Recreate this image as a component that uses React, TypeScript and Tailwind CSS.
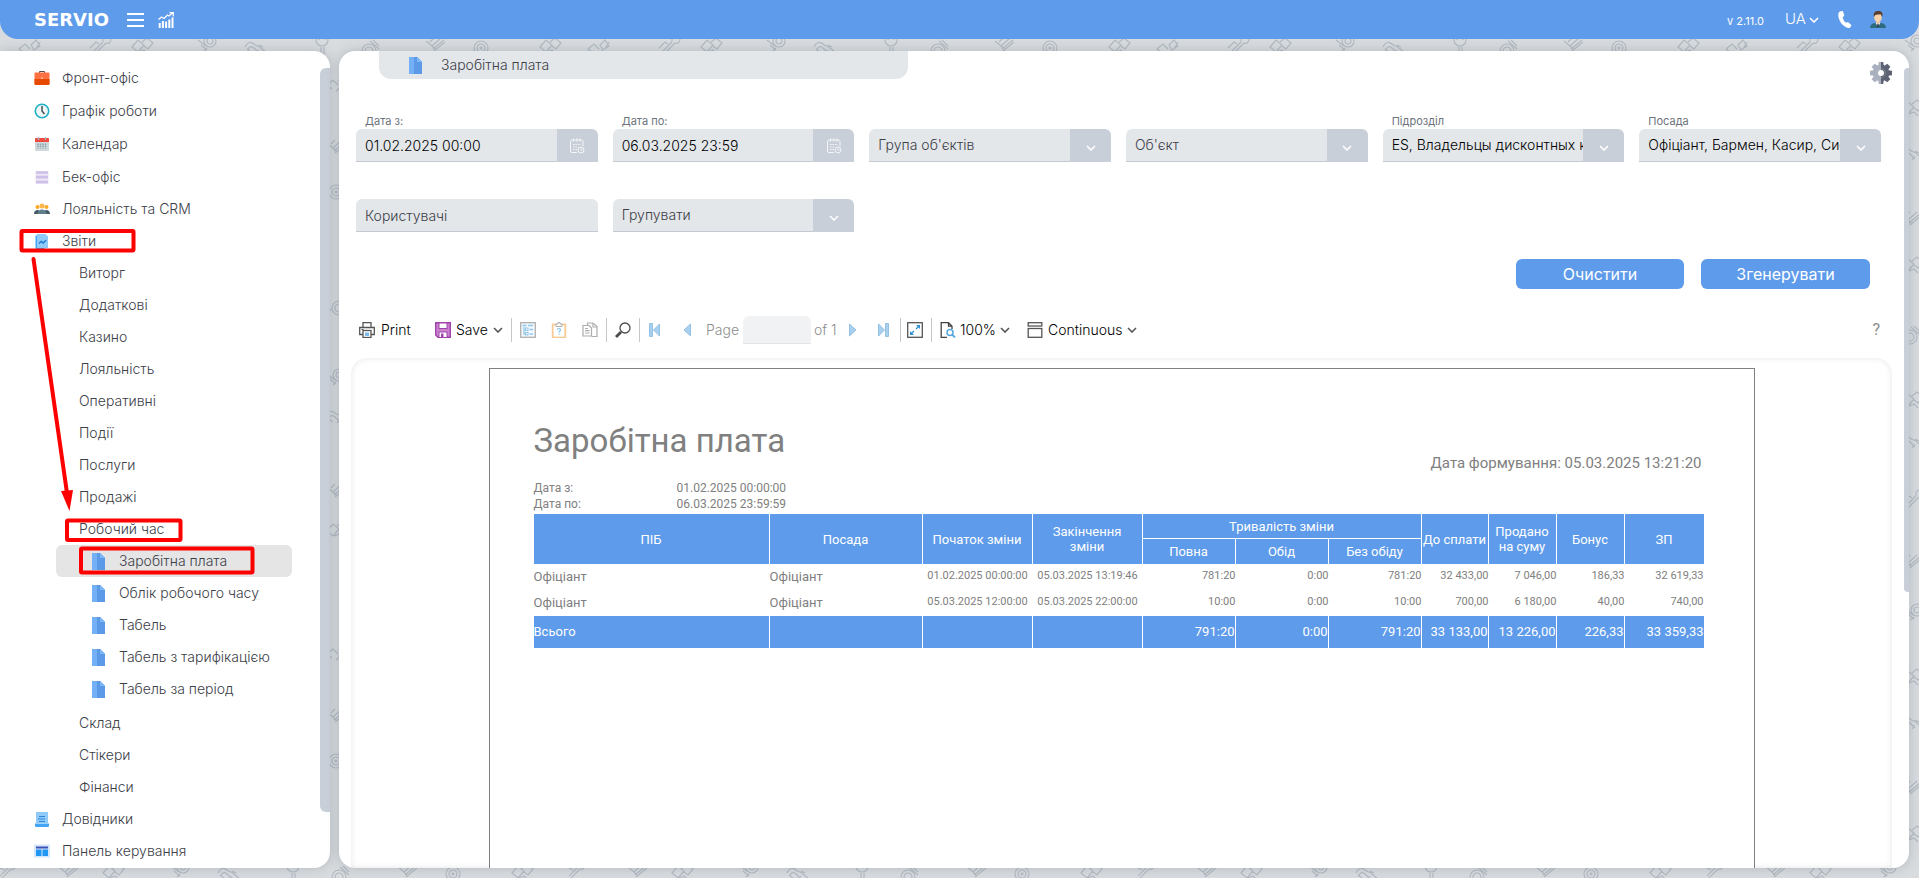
import React from "react";

type IconProps = { className?: string };

function Doodles() {
  const pyramid = (x: number, y: number, k: string) => (
    <g key={k} transform={`translate(${x} ${y})`}>
      <path d="M-9 3l6-5 5 5M-4 7l-5-4M3-1l5-5 4 6-6 4zM8 3l4-7M0 9l5-4" />
    </g>
  );
  const wrench = (x: number, y: number, k: string) => (
    <g key={k} transform={`translate(${x} ${y})`}>
      <path d="M-7 8L5-4M-5 10L8-3M5-4c-1-4 2-7 5-6M8-3c3 1 5-1 5-4M-8 2l6-6 3 2" />
    </g>
  );
  const cards = (x: number, y: number, k: string) => (
    <g key={k} transform={`translate(${x} ${y})`}>
      <path d="M-9 1l6-7 6 5-6 7zM1-4l5-4 6 5-5 6-4-3M-2 6l5-2 4 4" />
    </g>
  );
  const comb = (x: number, y: number, k: string) => (
    <g key={k} transform={`translate(${x} ${y})`}>
      <circle cx="3" cy="-5" r="6" />
      <circle cx="3" cy="-5" r="3" />
      <path d="M-1 0l-8-6M0 2l-3 3M-6-1l6 5" />
    </g>
  );
  const hands = (x: number, y: number, k: string) => (
    <g key={k} transform={`translate(${x} ${y})`}>
      <path d="M-10 1c2-5 6-6 9-3s5 1 7 4l6 5M-7 3c2-3 4-3 6-1l5 5M-3 7l-5-4M4-1l4 2M1 8l3-4" />
    </g>
  );
  const loupe = (x: number, y: number, k: string) => (
    <g key={k} transform={`translate(${x} ${y})`}>
      <circle cx="0" cy="-6" r="6" />
      <path d="M-1 1v7h3V1M-3-6a3 3 0 016 0" />
    </g>
  );
  const plate = (x: number, y: number, k: string) => (
    <g key={k} transform={`translate(${x} ${y})`}>
      <circle cx="-1" cy="5" r="7" />
      <circle cx="-1" cy="5" r="4" />
      <path d="M0-5l9 8M3-6l6 6M-9 6l-2 3" />
    </g>
  );
  const brush = (x: number, y: number, k: string) => (
    <g key={k} transform={`translate(${x} ${y})`}>
      <path d="M-9-5l6 5 9-8M-2 3L9-6M-5-4l4-4M-1 5L10-4M-3 0l3 3" />
    </g>
  );
  const at = (x: number, y: number, k: string) => (
    <g key={k} transform={`translate(${x} ${y})`}>
      <circle cx="0" cy="2" r="7" />
      <circle cx="0" cy="2" r="4" />
      <circle cx="0" cy="2" r="1" />
    </g>
  );
  const kinds = [pyramid, wrench, cards, comb, hands, loupe, plate, brush, at, cards];
  const top = [28, 98, 141, 207, 255, 322, 370, 435, 481, 549];
  const bottom = [3, 68, 112, 180, 228, 293, 340, 407, 453, 521];
  const bottomKinds = [wrench, brush, cards, comb, hands, loupe, plate, brush, at, cards];
  const left = [82, 148, 190, 380, 415, 492, 530];
  const leftKinds = [pyramid, brush, at, comb, hands, brush, cards];
  const right = [108, 152, 220, 265, 332, 400, 440, 500, 563];
  const rightKinds = [cards, hands, brush, cards, plate, cards, hands, wrench, brush];
  return (
    <svg className="absolute inset-0 h-full w-full" aria-hidden="true">
      <defs>
        <pattern id="doodles" width="569" height="569" patternUnits="userSpaceOnUse">
          <g fill="none" stroke="#b3bac2" strokeWidth="1.2">
            {top.map((x, i) => kinds[i](x, 46, "t" + i))}
            {bottom.map((x, i) => bottomKinds[i](x, 303, "b" + i))}
            {left.map((y, i) => leftKinds[i](336, y, "l" + i))}
            {right.map((y, i) => rightKinds[i](204, y, "r" + i))}
          </g>
        </pattern>
      </defs>
      <rect width="100%" height="100%" fill="url(#doodles)" />
    </svg>
  );
}

function FileIcon({ className = "" }: IconProps) {
  return (
    <svg viewBox="0 0 13 17" className={`h-[17px] w-[13px] shrink-0 ${className}`} aria-hidden="true">
      <path d="M0 0h8l5 5v12H0z" fill="#74b0f6" />
      <path d="M5 0h3l5 5v12H5z" fill="#5c9ae8" />
      <path d="M8 0l5 5H8z" fill="#7db8fb" />
    </svg>
  );
}

const topIcons: Record<string, React.ReactNode> = {
  brief: (
    <>
      <path d="M5.500 3V1.500h5V3" fill="none" stroke="#5a4a45" strokeWidth="1" />
      <rect x="0.500" y="2.500" width="15" height="12" rx="1" fill="#ff7043" />
      <path d="M.5 9h15v5a1 1 0 01-1 1h-13a1 1 0 01-1-1z" fill="#e64a00" />
      <rect x="7" y="7.500" width="2" height="1" fill="#ffe0c0" />
    </>
  ),
  clock: (
    <>
      <circle cx="8" cy="8" r="6.700" fill="#f3f6f6" stroke="#1bb1c6" strokeWidth="1.600" />
      <path d="M8 3v5l2.500 3" fill="none" stroke="#37474f" strokeWidth="1.400" />
    </>
  ),
  cal: (
    <>
      <rect x="1" y="4" width="14" height="11" rx="1" fill="#cfd8dc" />
      <path d="M1 6V3a1 1 0 011-1h12a1 1 0 011 1v3z" fill="#f04a3e" />
      <path d="M4.500 1v3M11.500 1v3" stroke="#a8b8c0" strokeWidth="1.400" />
      <path d="M4 7.500v5M6.500 7.500v5M9 7.500v5M11.500 7.500v5" stroke="#90a4ae" strokeWidth="1.500" strokeDasharray="1.500 .6" />
    </>
  ),
  rows: (
    <>
      <rect x="1.500" y="2" width="13" height="13" fill="#ece6f7" />
      <path d="M2 3.500h12M2 8.200h12M2 13h12" stroke="#cdc0e8" strokeWidth="2.700" />
    </>
  ),
  people: (
    <>
      <circle cx="3.500" cy="6" r="2" fill="#ffa726" />
      <circle cx="12.500" cy="6" r="2" fill="#ffa726" />
      <circle cx="8" cy="5" r="2.500" fill="#ffb74d" />
      <path d="M0 13c0-3 2-4 3.500-4S7 10 7 13zM9 13c0-3 2-4 3.500-4S16 10 16 13z" fill="#455a64" />
      <path d="M3.500 13c0-3 2-4.500 4.500-4.500s4.500 1.500 4.500 4.500z" fill="#607d8b" />
    </>
  ),
  report: (
    <>
      <path d="M1.500 2.500h9V16h-8a1 1 0 01-1-1z" fill="#42a5f5" />
      <path d="M3 1h8.500L14 3.500V15H3z" fill="#90caf9" />
      <path d="M5 10.500l2.200-2.200 2 1.700L12 7.200" fill="none" stroke="#1976d2" strokeWidth="1.300" />
    </>
  ),
  book: (
    <>
      <path d="M2 1h12v11H2z" fill="#90caf9" />
      <path d="M1 12.500h14V15a1 1 0 01-1 1H2a1 1 0 01-1-1z" fill="#42a5f5" />
      <path d="M5 5.500h6M4 8h7M5 10.500h6" stroke="#2d86da" strokeWidth="1.100" />
    </>
  ),
  panel: (
    <>
      <rect x="0" y="1.500" width="16" height="13" fill="#d4e6fa" />
      <rect x="2" y="3.500" width="12" height="2" fill="#3f51b5" />
      <rect x="2" y="6.500" width="5.500" height="6.500" fill="#2196f3" />
      <rect x="8.500" y="6.500" width="5.500" height="6.500" fill="#2196f3" />
    </>
  ),
};

function TopItem({ icon, label, tall }: { icon: string; label: string; tall?: boolean }) {
  return (
    <li>
      <a href="#" className={`flex items-center gap-3 pl-[34px] ${tall ? "h-[33px]" : "h-8"}`}>
        <svg viewBox="0 0 16 16" className="h-4 w-4 shrink-0" aria-hidden="true">
          {topIcons[icon]}
        </svg>
        {label}
      </a>
    </li>
  );
}

function SubItem({ label }: { label: string }) {
  return (
    <li>
      <a href="#" className="flex h-8 items-center pl-[79px]">
        {label}
      </a>
    </li>
  );
}

function LeafItem({ label, active }: { label: string; active?: boolean }) {
  return (
    <li>
      <a
        href="#"
        aria-current={active ? "page" : undefined}
        className={`ml-14 flex h-8 w-[236px] items-center gap-3.5 rounded-md pl-9 ${active ? "bg-[#e5e5e5]" : ""}`}
      >
        <FileIcon />
        {label}
      </a>
    </li>
  );
}

function Annotations() {
  return (
    <svg className="pointer-events-none absolute left-0 top-0 h-[600px] w-[330px]" aria-hidden="true">
      <g fill="none" stroke="#ff0000" strokeWidth="4">
        <rect x="21.500" y="231" width="112" height="19.500" rx="1" />
        <rect x="67" y="520.500" width="113.500" height="19.500" rx="1" />
        <rect x="81" y="548.500" width="171.500" height="24" rx="1" />
        <path d="M33.500 259L67 493" strokeLinecap="round" />
      </g>
      <path d="M61 491l12-1-3.500 21z" fill="#ff0000" />
    </svg>
  );
}

function Sidebar() {
  const subs = ["Виторг", "Додаткові", "Казино", "Лояльність", "Оперативні", "Події", "Послуги", "Продажі", "Робочий час"];
  const leaves = ["Облік робочого часу", "Табель", "Табель з тарифікацією", "Табель за період"];
  return (
    <aside className="flex w-[330px] shrink-0 overflow-hidden rounded-r-2xl bg-white shadow-[0_0_12px_rgba(90,100,110,0.3)]">
      <nav className="flex-1 pt-2.5" aria-label="Меню">
        <ul className="whitespace-nowrap text-sm font-light text-[#3c4048]">
          <TopItem icon="brief" label="Фронт-офіс" tall />
          <TopItem icon="clock" label="Графік роботи" tall />
          <TopItem icon="cal" label="Календар" tall />
          <TopItem icon="rows" label="Бек-офіс" tall />
          <TopItem icon="people" label="Лояльність та CRM" />
          <TopItem icon="report" label="Звіти" />
          {subs.map((s) => (
            <SubItem key={s} label={s} />
          ))}
          <li className="pb-0.5">
            <ul>
              <LeafItem label="Заробітна плата" active />
              {leaves.map((s) => (
                <LeafItem key={s} label={s} />
              ))}
            </ul>
          </li>
          <SubItem label="Склад" />
          <SubItem label="Стікери" />
          <SubItem label="Фінанси" />
          <TopItem icon="book" label="Довідники" />
          <TopItem icon="panel" label="Панель керування" />
        </ul>
      </nav>
      <div className="flex w-2.5 flex-col pb-14 pt-[17px]">
        <div className="flex-1 rounded-l-md bg-[#c8cfd8]" />
      </div>
    </aside>
  );
}

function Chevron({ className = "" }: IconProps) {
  return (
    <svg viewBox="0 0 10 6" className={`h-1.5 w-2.5 shrink-0 ${className}`} aria-hidden="true">
      <path d="M1 1l4 4 4-4" fill="none" stroke="currentColor" strokeWidth="1.600" />
    </svg>
  );
}

function CalIcon() {
  return (
    <svg viewBox="0 0 16 16" className="h-4 w-4" fill="none" stroke="#f4f6f8" aria-hidden="true">
      <path d="M8 14.500H3a1.500 1.500 0 01-1.500-1.500V3.500A1.500 1.500 0 013 2h9.500A1.500 1.500 0 0114 3.500V8M4.500.5v3M7.800.5v3M11 .5v3" />
      <path d="M4 6.500h8M4 9h5M4 11.500h4" strokeDasharray="1.500 1" />
      <circle cx="12" cy="12" r="3" />
      <path d="M12 10.500V12h1.500" />
    </svg>
  );
}

type FieldProps = { id: string; label: string; value?: string; kind: "date" | "select" | "text" };

function Field({ id, label, value, kind }: FieldProps) {
  const control =
    "h-full min-w-0 flex-1 appearance-none border-b border-[#c3cad3] bg-[#e4e7ea] pl-[9px] text-sm font-light outline-none rounded-tl-md " +
    (value ? "text-black" : "text-[#3c4048] placeholder:text-[#3c4048]") +
    (kind === "text" ? " rounded-tr-md" : "");
  const name = value ? undefined : label;
  return (
    <div className="flex min-w-0 flex-col justify-end">
      {value && (
        <label htmlFor={id} className="h-4 pl-[9px] text-[11px] leading-4 text-[#6d737c]">
          {label}
        </label>
      )}
      <div className="flex h-[33px]">
        {kind === "select" ? (
          <select id={id} aria-label={name} className={control} defaultValue="v">
            <option value="v">{value ?? label}</option>
          </select>
        ) : (
          <input id={id} aria-label={name} type="text" className={control} defaultValue={value} placeholder={name} />
        )}
        {kind === "date" && (
          <button type="button" aria-label="Календар" className="flex w-[41px] items-center justify-center rounded-tr-md bg-[#c8cfd8]">
            <CalIcon />
          </button>
        )}
        {kind === "select" && (
          <span className="flex w-[41px] items-center justify-center rounded-tr-md bg-[#c8cfd8] pt-1 text-white">
            <Chevron />
          </span>
        )}
      </div>
    </div>
  );
}

function Sep() {
  return <span className="h-6 w-px shrink-0 bg-[#c6c6c6]" />;
}

function Toolbar() {
  return (
    <div className="flex h-7 items-center whitespace-nowrap pl-2 text-sm font-light text-black">
      <button type="button" className="flex w-[76px] items-center gap-1.5">
        <svg viewBox="0 0 16 16" className="h-4 w-4" aria-hidden="true">
          <path d="M4 5V.7h8V5M4 12.500H.700V5.500h14.600v7H12" fill="none" stroke="#555" strokeWidth="1.300" />
          <rect x="4" y="8.500" width="8" height="7" fill="#fff" stroke="#555" strokeWidth="1.300" />
          <rect x="6" y="10.500" width="4" height="3.500" fill="#7db9e8" />
          <path d="M2.500 7.500h2" stroke="#555" />
        </svg>
        Print
      </button>
      <button type="button" className="flex w-[76px] items-center gap-[5px]">
        <svg viewBox="0 0 16 16" className="h-4 w-4" aria-hidden="true">
          <path d="M.7.7h14.600v14.600H3L.7 13z" fill="#ca82cf" stroke="#a044ac" strokeWidth="1.400" />
          <rect x="4" y="1" width="8" height="5.500" fill="#fff" stroke="#a044ac" />
          <rect x="4" y="10" width="8" height="5.500" fill="#fff" stroke="#a044ac" />
          <rect x="6" y="11.500" width="2.500" height="4" fill="#a044ac" />
        </svg>
        Save
        <Chevron className="text-[#555]" />
      </button>
      <Sep />
      <div className="flex w-[94px] items-center gap-[15px] pl-2">
        <button type="button" aria-label="Bookmarks">
          <svg viewBox="0 0 16 16" className="block h-4 w-4" aria-hidden="true">
            <rect x=".7" y=".7" width="14.600" height="14.600" fill="#f3f9fd" stroke="#b0b0b0" strokeWidth="1.300" />
            <path d="M2.500 3.500h4M8 3.500h5M9.500 7.500H13M9.500 12H13M4 5v7h2" stroke="#93c8ea" strokeWidth="1.300" fill="none" />
            <rect x="5.500" y="6" width="2.500" height="2.500" fill="none" stroke="#93c8ea" />
            <rect x="5.500" y="10.500" width="2.500" height="2.500" fill="none" stroke="#93c8ea" />
          </svg>
        </button>
        <button type="button" aria-label="Parameters">
          <svg viewBox="0 0 16 16" className="block h-4 w-4" aria-hidden="true">
            <rect x="1.700" y="2.500" width="12.600" height="13" fill="#fff" stroke="#f6cb95" strokeWidth="1.800" />
            <path d="M5 2h2V.5h2V2h2v2.500H5z" fill="#fff" stroke="#b0b0b0" />
            <path d="M6.500 8c0-2 3-2 3 0 0 1.200-1.500 1-1.500 2.400M8 11.500v1.300" fill="none" stroke="#85c2ea" strokeWidth="1.200" />
          </svg>
        </button>
        <button type="button" aria-label="Resources">
          <svg viewBox="0 0 16 16" className="block h-4 w-4" fill="#fff" stroke="#adadad" strokeWidth="1.200" aria-hidden="true">
            <path d="M5.500 4V1H11l4 3.500v10H9.500" />
            <path d="M11 1v4h4" fill="none" />
            <path d="M1 3.500h6l2.500 2.500V14H1z" />
            <path d="M3 6.500h3M3 8.700h4.500M3 11h4.500" />
          </svg>
        </button>
      </div>
      <Sep />
      <button type="button" aria-label="Find" className="w-8 pl-2">
        <svg viewBox="0 0 16 16" className="block h-4 w-4" fill="none" stroke="#4c4c4c" aria-hidden="true">
          <circle cx="10" cy="6" r="5" strokeWidth="1.300" />
          <path d="M6 10L1 15" strokeWidth="2.800" />
        </svg>
      </button>
      <Sep />
      <div className="flex items-center text-[#8e8e8e]">
        <button type="button" aria-label="First page" className="ml-[9px]">
          <svg viewBox="0 0 11 14" className="block h-3.5 w-[11px]" aria-hidden="true">
            <path d="M.5.5h3v13h-3zM10.500 1v12L4.500 7z" fill="#a9d1ee" stroke="#83b7df" strokeWidth=".8" />
          </svg>
        </button>
        <button type="button" aria-label="Previous page" className="ml-[23px]">
          <svg viewBox="0 0 8 14" className="block h-3.5 w-2" aria-hidden="true">
            <path d="M7.500 1v12L1 7z" fill="#a9d1ee" stroke="#83b7df" strokeWidth=".8" />
          </svg>
        </button>
        <label htmlFor="page-no" className="ml-[15px] w-[37px]">
          Page
        </label>
        <input id="page-no" type="text" className="h-7 w-[68px] rounded-t-md border-b border-[#e0e3e7] bg-[#f1f2f4]" />
        <span className="ml-[3px] w-[35px]">of 1</span>
        <button type="button" aria-label="Next page">
          <svg viewBox="0 0 8 14" className="block h-3.5 w-2" aria-hidden="true">
            <path d="M.5 1v12L7 7z" fill="#a9d1ee" stroke="#83b7df" strokeWidth=".8" />
          </svg>
        </button>
        <button type="button" aria-label="Last page" className="ml-[21px] mr-[11px]">
          <svg viewBox="0 0 11 14" className="block h-3.5 w-[11px]" aria-hidden="true">
            <path d="M7.500.5h3v13h-3zM.5 1v12l6-6z" fill="#a9d1ee" stroke="#83b7df" strokeWidth=".8" />
          </svg>
        </button>
      </div>
      <Sep />
      <button type="button" aria-label="Full screen" className="w-[30px] pl-1.5">
        <svg viewBox="0 0 16 16" className="block h-4 w-4" fill="none" aria-hidden="true">
          <rect x=".7" y=".7" width="14.600" height="14.600" stroke="#555" strokeWidth="1.300" />
          <path d="M9 7l3-3M7 9l-3 3" stroke="#2f8fd3" strokeWidth="1.300" />
          <path d="M9 3h4v4zM3 9v4h4z" fill="#2f8fd3" />
        </svg>
      </button>
      <Sep />
      <button type="button" className="ml-2 flex w-[87px] items-center gap-1">
        <svg viewBox="0 0 16 16" className="h-4 w-4" fill="none" aria-hidden="true">
          <path d="M7 15.300H1.200V.7h7.300L12 4.200V7M8.500.7v3.500H12" stroke="#444" strokeWidth="1.300" />
          <circle cx="10" cy="10.500" r="3" stroke="#55a7df" strokeWidth="1.500" />
          <path d="M12 12.500l3 3" stroke="#55a7df" strokeWidth="1.800" />
        </svg>
        100%
        <Chevron className="text-[#555]" />
      </button>
      <button type="button" className="flex items-center gap-[5px]">
        <svg viewBox="0 0 16 16" className="h-4 w-4" fill="#fff" stroke="#555" strokeWidth="1.300" aria-hidden="true">
          <rect x="1.200" y=".7" width="13.600" height="3.300" />
          <rect x="1.200" y="6.500" width="13.600" height="8.800" />
        </svg>
        Continuous
        <Chevron className="text-[#555]" />
      </button>
      <button type="button" aria-label="Help" className="ml-auto mr-3 font-['Roboto'] text-base font-normal text-[#8a8a8a]">
        ?
      </button>
    </div>
  );
}

const rows = [
  ["Офіціант", "Офіціант", "01.02.2025 00:00:00", "05.03.2025 13:19:46", "781:20", "0:00", "781:20", "32 433,00", "7 046,00", "186,33", "32 619,33"],
  ["Офіціант", "Офіціант", "05.03.2025 12:00:00", "05.03.2025 22:00:00", "10:00", "0:00", "10:00", "700,00", "6 180,00", "40,00", "740,00"],
];
const totals = ["Всього", "", "", "", "791:20", "0:00", "791:20", "33 133,00", "13 226,00", "226,33", "33 359,33"];

function Report() {
  const th = "border-r border-white p-0 font-normal last:border-r-0";
  return (
    <article className="mx-auto mt-[10px] w-[1266px] flex-1 border border-b-0 border-[#808080] bg-white px-11 pt-[52px] font-['Roboto'] text-[#808080]">
      <div className="flex items-start justify-between">
        <h1 className="text-[33px] leading-10">Заробітна плата</h1>
        <p className="mr-2 mt-8 text-[15px] leading-5">Дата формування: 05.03.2025 13:21:20</p>
      </div>
      <dl className="mt-[7px] grid grid-cols-[143px_1fr] text-xs leading-4">
        <dt>Дата з:</dt>
        <dd>01.02.2025 00:00:00</dd>
        <dt>Дата по:</dt>
        <dd>06.03.2025 23:59:59</dd>
      </dl>
      <table className="mt-0.5 w-[1170px] table-fixed border-separate border-spacing-0 whitespace-nowrap">
        <colgroup>
          <col className="w-[236px]" />
          <col className="w-[153px]" />
          <col className="w-[110px]" />
          <col className="w-[110px]" />
          <col className="w-[93px]" />
          <col className="w-[93px]" />
          <col className="w-[93px]" />
          <col className="w-[67px]" />
          <col className="w-[68px]" />
          <col className="w-[68px]" />
          <col className="w-[79px]" />
        </colgroup>
        <thead className="bg-[#5e9bea] text-[13px] leading-[15px] text-white">
          <tr className="h-[25px]">
            <th rowSpan={2} className={th}>ПІБ</th>
            <th rowSpan={2} className={th}>Посада</th>
            <th rowSpan={2} className={th}>Початок зміни</th>
            <th rowSpan={2} className={th}>Закінчення<br />зміни</th>
            <th colSpan={3} className={`${th} border-b`}>Тривалість зміни</th>
            <th rowSpan={2} className={th}>До сплати</th>
            <th rowSpan={2} className={th}>Продано<br />на суму</th>
            <th rowSpan={2} className={th}>Бонус</th>
            <th rowSpan={2} className={th}>ЗП</th>
          </tr>
          <tr className="h-[25px]">
            <th className={th}>Повна</th>
            <th className={th}>Обід</th>
            <th className="border-r border-white p-0 font-normal">Без обіду</th>
          </tr>
        </thead>
        <tbody>
          {rows.map((r, n) => (
            <tr key={n} className="h-[26px]">
              {r.map((c, i) => (
                <td
                  key={i}
                  className={
                    i < 2
                      ? "p-0 text-[13px] leading-4"
                      : i < 4
                      ? "p-0 pb-0.5 text-center text-[11px] leading-4"
                      : "p-0 pb-0.5 text-right text-[11px] leading-4"
                  }
                >
                  {c}
                </td>
              ))}
            </tr>
          ))}
        </tbody>
        <tfoot className="bg-[#5e9bea] text-[13px] leading-4 text-white">
          <tr className="h-8">
            {totals.map((c, i) => (
              <td key={i} className={`border-r border-white p-0 last:border-r-0 ${i ? "text-right" : "text-left"}`}>
                {c}
              </td>
            ))}
          </tr>
        </tfoot>
      </table>
    </article>
  );
}

function Header() {
  return (
    <header className="relative flex h-[39px] shrink-0 items-center rounded-b-[18px] bg-[#5e9bea] pl-[34px] pr-[33px] text-white">
      <a href="#" className="w-[93px] font-['DejaVu_Sans'] text-lg font-bold leading-none">
        SERVIO
      </a>
      <button type="button" aria-label="Меню" className="flex w-[17px] flex-col gap-1">
        <span className="h-0.5 bg-white" />
        <span className="h-0.5 bg-white" />
        <span className="h-0.5 bg-white" />
      </button>
      <button type="button" aria-label="Статистика" className="ml-3.5">
        <svg viewBox="0 0 16 16" className="block h-4 w-4" fill="none" stroke="#fff" aria-hidden="true">
          <path d="M.5 7.500l3-2.500 2.500 1.500L9.500 3l1.500 1 4-3.500M11.500.7h3.800v3.800" strokeWidth="1.300" />
          <path d="M1.700 16v-5M4.900 16V9M8.100 16v-6.500M11.300 16V7.500M14.500 16V5.500" strokeWidth="2" />
        </svg>
      </button>
      <div className="ml-auto flex items-center">
        <span className="mt-1 w-[58px] text-[11px]">v 2.11.0</span>
        <button type="button" className="flex w-[53px] items-center gap-[3px] text-[15px] font-light">
          UA
          <Chevron />
        </button>
        <button type="button" aria-label="Телефон" className="w-8">
          <svg viewBox="0 0 14 17" className="block h-[17px] w-3.5" fill="#fff" aria-hidden="true">
            <path d="M2.500.3L5 0l1.300 4.800-1.700 1.400c.4 2.200 1.600 4.200 3.400 5.500l2-.8 3.500 3.300-1.300 2.200c-1 .8-2.600.6-4-.1C3.500 13.900.5 9 .3 4.200.2 2.200 1 .8 2.500.3z" />
          </svg>
        </button>
        <button type="button" aria-label="Профіль">
          <svg viewBox="0 0 16 17" className="block h-[17px] w-4" aria-hidden="true">
            <path d="M0 17c0-3 2-4.500 5-5h6c3 .5 5 2 5 5z" fill="#2f6b7f" />
            <path d="M5.500 11.500h5L8 16z" fill="#fff" />
            <path d="M7.500 12.500h1l.5 3-1 1-1-1z" fill="#25333d" />
            <rect x="6.500" y="9" width="3" height="3.500" fill="#f1c092" />
            <ellipse cx="8" cy="6.500" rx="3.800" ry="4.500" fill="#fbd3ab" />
            <path d="M4 6C3 2 5 0 8 0s5.500 1 4.200 6C11.500 4.500 11 3.500 10 3.300 8 4 5 3 4 6z" fill="#5b3f2d" />
          </svg>
        </button>
      </div>
    </header>
  );
}

function Gear() {
  const teeth = [0, 45, 90, 135, 180, 225, 270, 315];
  return (
    <svg viewBox="0 0 22 22" className="block h-[22px] w-[22px]" aria-hidden="true">
      <defs>
        <linearGradient id="gear-halves">
          <stop offset="50%" stopColor="#a9b0be" />
          <stop offset="50%" stopColor="#5d6373" />
        </linearGradient>
        <mask id="gear-mask">
          <g fill="#fff">
            <circle cx="11" cy="11" r="8.300" />
            {teeth.map((a) => (
              <path key={a} d="M8.200 4L8.800 0h4.400l.6 4z" transform={`rotate(${a} 11 11)`} />
            ))}
          </g>
          <circle cx="11" cy="11" r="3" fill="#000" />
        </mask>
      </defs>
      <rect width="22" height="22" fill="url(#gear-halves)" mask="url(#gear-mask)" />
      <path d="M11 6.500a4.500 4.500 0 010 9" fill="none" stroke="#7b8292" />
    </svg>
  );
}

export default function App() {
  return (
    <div className="relative flex h-screen flex-col overflow-hidden bg-[#d8dcdf] font-['Inter',sans-serif]">
      <Doodles />
      <Header />
      <div className="relative flex min-h-0 flex-1 gap-[9px] pb-2.5 pr-2.5 pt-3">
        <Sidebar />
        <main className="flex min-w-0 flex-1 overflow-hidden rounded-2xl bg-white shadow-[0_0_12px_rgba(90,100,110,0.3)]">
          <div className="flex min-w-0 flex-1 flex-col px-3">
            <div className="flex h-9 shrink-0 items-start justify-between pl-7">
              <div className="flex h-7 w-[529px] items-center gap-[19px] rounded-b-xl bg-[#e4e7ea] pl-[30px] text-sm font-light text-[#3c4048]">
                <FileIcon />
                Заробітна плата
              </div>
              <button type="button" aria-label="Налаштування" className="mt-[11px]">
                <Gear />
              </button>
            </div>
            <form className="shrink-0 pl-[5px] pr-[11px] pt-[26px]">
              <div className="grid auto-rows-[49px] grid-cols-6 gap-x-[15px] gap-y-[21px]">
                <Field id="from" kind="date" label="Дата з:" value="01.02.2025 00:00" />
                <Field id="to" kind="date" label="Дата по:" value="06.03.2025 23:59" />
                <Field id="group" kind="select" label="Група об'єктів" />
                <Field id="object" kind="select" label="Об'єкт" />
                <Field id="dept" kind="select" label="Підрозділ" value="ES, Владельцы дисконтных карт" />
                <Field id="post" kind="select" label="Посада" value="Офіціант, Бармен, Касир, Система" />
                <Field id="users" kind="text" label="Користувачі" />
                <Field id="grouping" kind="select" label="Групувати" />
              </div>
              <div className="mr-[11px] mt-[27px] flex justify-end gap-[17px] text-base text-white">
                <button type="button" className="h-[30px] w-[168px] rounded-md bg-[#5e9bea]">
                  Очистити
                </button>
                <button type="button" className="h-[30px] w-[169px] rounded-md bg-[#5e9bea]">
                  Згенерувати
                </button>
              </div>
            </form>
            <div className="mt-[27px] shrink-0">
              <Toolbar />
            </div>
            <section className="mt-3.5 flex min-h-0 flex-1 flex-col rounded-t-2xl shadow-[inset_0_0_6px_rgba(0,0,0,0.1)]">
              <Report />
            </section>
          </div>
          <div className="flex w-[5px] flex-col pb-[276px] pt-[17px]">
            <div className="flex-1 rounded-l bg-[#c8cfd8]" />
          </div>
        </main>
      </div>
      <Annotations />
    </div>
  );
}
